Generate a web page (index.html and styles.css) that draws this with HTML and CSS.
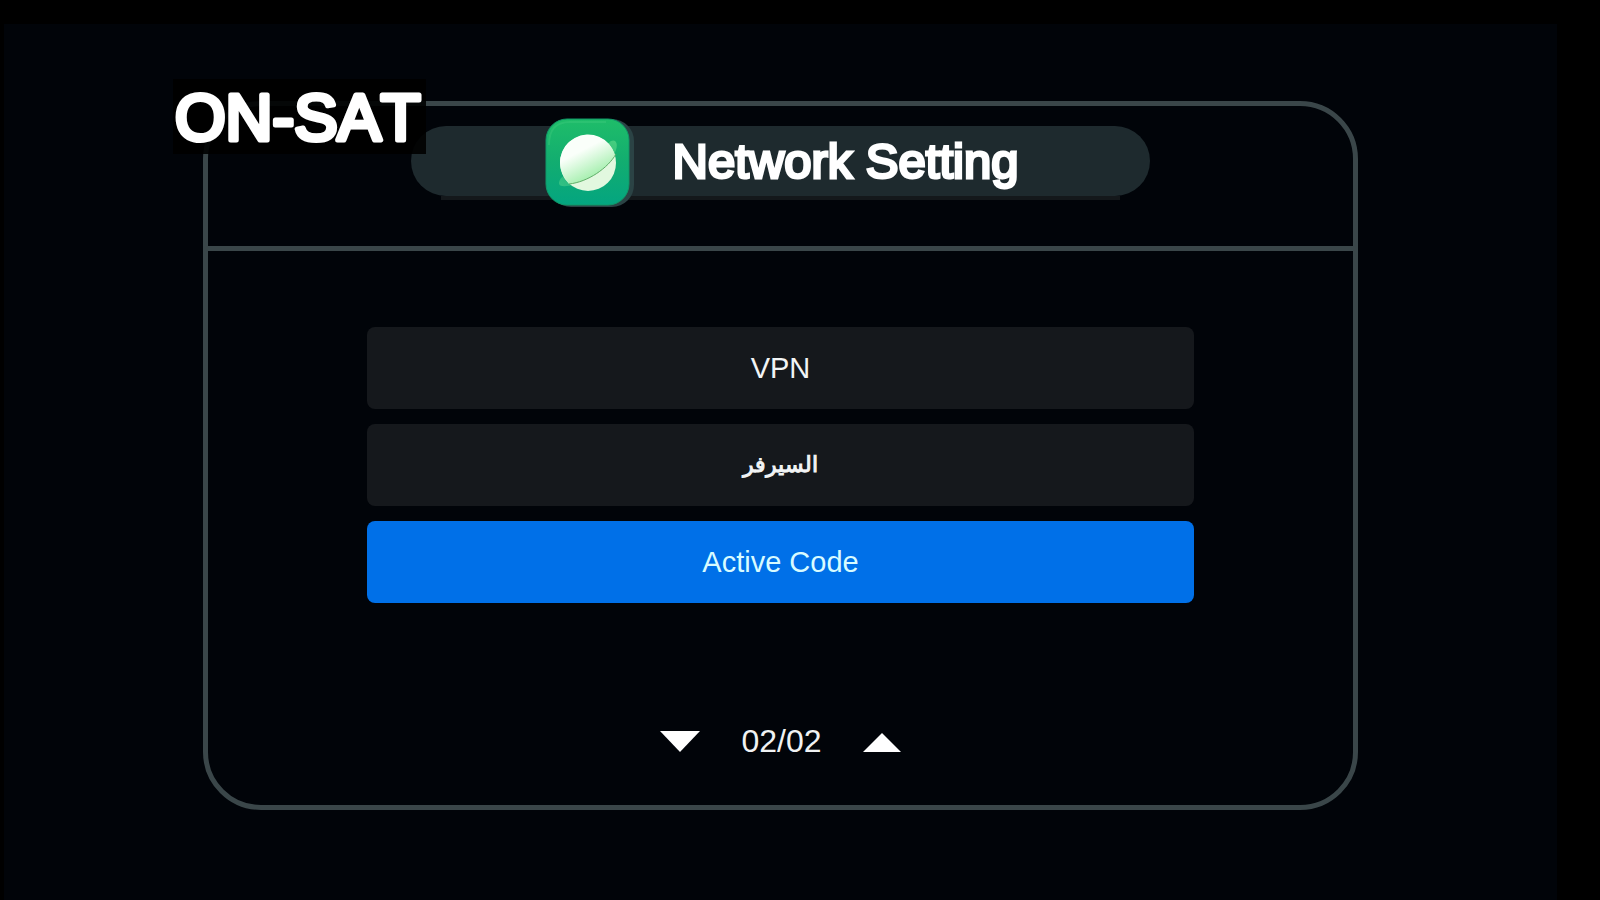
FILE: index.html
```html
<!DOCTYPE html>
<html lang="en">
<head>
  <meta charset="UTF-8">
  <meta name="viewport" content="width=device-width, initial-scale=1.0">
  <title>Network Setting</title>
  <link rel="stylesheet" href="styles.css">
</head>
<body>
  <div class="screen">
    <main class="panel">
      <svg class="channel" viewBox="0 0 253 75" role="img" aria-label="ON-SAT">
        <text class="channel-name" x="2" y="61">ON-SAT</text>
      </svg>

      <header class="panel-header">
        <div class="title-bar">
          <svg class="title-icon" viewBox="0 0 90 90" aria-hidden="true">
            <defs>
              <linearGradient id="tile" x1="0" y1="0" x2="0" y2="1">
                <stop offset="0" stop-color="#1fbd69"/>
                <stop offset="0.5" stop-color="#12ad70"/>
                <stop offset="1" stop-color="#04a580"/>
              </linearGradient>
              <linearGradient id="planet" x1="0.3" y1="0.1" x2="0.7" y2="0.8">
                <stop offset="0.3" stop-color="#fafffa"/>
                <stop offset="1" stop-color="#a5efae"/>
              </linearGradient>
              <linearGradient id="ring" x1="0" y1="1" x2="1" y2="0">
                <stop offset="0" stop-color="#5fd98f" stop-opacity="0.5"/>
                <stop offset="0.5" stop-color="#5fd98f" stop-opacity="0.1"/>
                <stop offset="1" stop-color="#6be08d" stop-opacity="0.6"/>
              </linearGradient>
            </defs>
            <rect x="4" y="1" width="85" height="88" rx="22" fill="#2b4345"/>
            <rect x="1" y="1" width="83" height="86" rx="21" fill="url(#tile)" stroke="#109868"/>
            <path d="M4 27C4 12 10 4 25 4H61" fill="none" stroke="#4bd084" stroke-width="2" opacity="0.3"/>
            <path d="M16 60C10 69 18 70 31 66C48 60 66 46 71 32C74 23 68 20 64 25" fill="url(#ring)"/>
            <circle cx="43" cy="45" r="28" fill="#e2f8df"/>
            <path d="M22 63A28 28 0 1 1 70 37C63 50 43 64 24 66Z" fill="url(#planet)"/>
            <path d="M24 66C43 64 63 50 71 36" fill="none" stroke="#5fae68" stroke-width="1"/>
          </svg>
          <h1>Network Setting</h1>
        </div>
      </header>

      <div class="panel-body">
        <div class="menu">
          <button class="menu-item" type="button">VPN</button>
          <button class="menu-item arabic" type="button" lang="ar" dir="rtl">السيرفر</button>
          <button class="menu-item active" type="button">Active Code</button>
        </div>

        <div class="pager">
          <button class="pager-btn" type="button" aria-label="Next page">
            <svg width="40" height="22" viewBox="0 0 40 22"><path d="M0 1H40L20 22Z"/></svg>
          </button>
          <span class="page-count">02/02</span>
          <button class="pager-btn" type="button" aria-label="Previous page">
            <svg width="38" height="22" viewBox="0 0 38 22"><path d="M0 22H38L19 3Z"/></svg>
          </button>
        </div>
      </div>
    </main>
  </div>
</body>
</html>
```

FILE: styles.css
```css
* {
  box-sizing: border-box;
}

body {
  margin: 0;
  padding: 24px 43px 0 4px;
  min-height: 100vh;
  display: flex;
  background: #000;
  color: #fff;
  font-family: "Liberation Sans", Arial, sans-serif;
}

.screen {
  flex: 1;
  padding: 77px 0;
  background: #010409;
}

.panel {
  position: relative;
  width: 74.4%;
  margin: 0 auto;
  border: 5px solid #3a4649;
  border-radius: 58px;
}

/* Channel name, laid over the corner of the panel */
.channel {
  position: absolute;
  z-index: 2;
  top: -27px;
  left: -35px;
  width: 253px;
  height: 75px;
  background: rgba(0, 0, 0, 0.9);
}

.channel-name {
  fill: #fff;
  stroke: #fff;
  stroke-width: 5px;
  stroke-linejoin: round;
  font-size: 65px;
  font-kerning: none;
}

.panel-header {
  padding: 20px 0 50px;
  border-bottom: 5px solid #3a4649;
}

.title-bar {
  position: relative;
  display: flex;
  align-items: center;
  justify-content: center;
  gap: 38px;
  width: 64.5%;
  height: 70px;
  margin: 0 auto;
  padding-left: 2px;
  border-radius: 35px;
  background: #1e2a2e;
}

.title-bar::after {
  content: "";
  position: absolute;
  left: 30px;
  right: 30px;
  bottom: -4px;
  height: 4px;
  background: #14181b;
}

.title-icon {
  z-index: 1;
  flex: none;
  width: 90px;
  height: 90px;
  margin-top: 4px;
}

h1 {
  margin: 0;
  font-size: 49px;
  font-weight: normal;
  line-height: 56px;
  -webkit-text-stroke: 3px #fff;
}

.panel-body {
  padding: 76px 0 44px;
}

.menu {
  display: flex;
  flex-direction: column;
  gap: 15px;
  width: 72.2%;
  margin: 0 auto;
}

.menu-item {
  height: 82px;
  padding: 0;
  border: none;
  border-radius: 8px;
  background: #15181c;
  color: #f2f4f5;
  font-family: inherit;
  font-size: 29px;
  cursor: pointer;
}

.menu-item.arabic {
  font-size: 22px;
  -webkit-text-stroke: 1px #f2f4f5;
}

.menu-item.active {
  background: #0070e8;
  color: #d8fbff;
}

.pager {
  display: flex;
  align-items: center;
  justify-content: center;
  gap: 41px;
  height: 40px;
  margin-top: 118px;
}

.pager-btn {
  display: flex;
  padding: 0;
  border: none;
  background: none;
  cursor: pointer;
}

.pager-btn path {
  fill: #fff;
}

.page-count {
  color: #f0f2f3;
  font-size: 32px;
}
```
